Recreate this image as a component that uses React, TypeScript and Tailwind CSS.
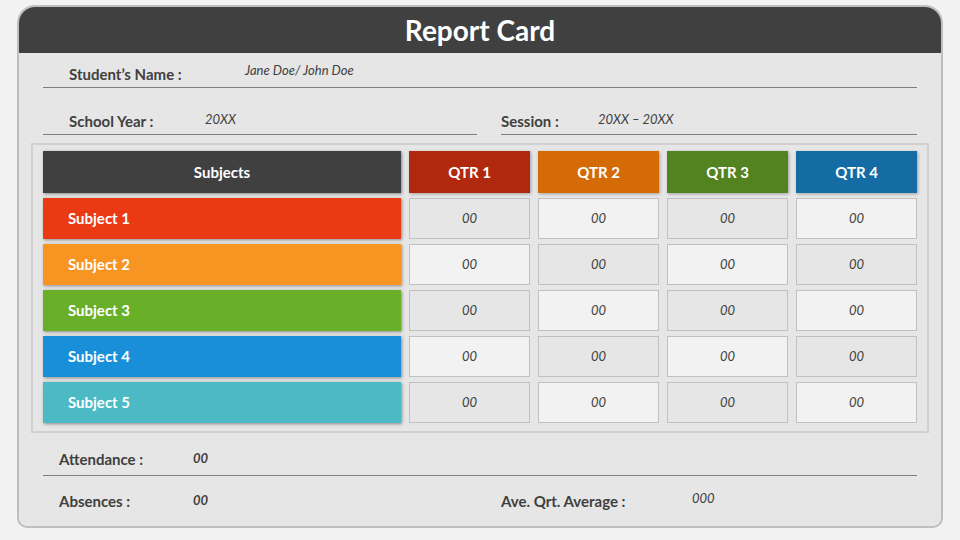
export default function App() {
  const q = [
    { t: "QTR 1", c: "bg-[#b0290f]" },
    { t: "QTR 2", c: "bg-[#d46b07]" },
    { t: "QTR 3", c: "bg-[#538320]" },
    { t: "QTR 4", c: "bg-[#156ba3]" },
  ];
  const subs = [
    { t: "Subject 1", c: "bg-[#ea3a14]" },
    { t: "Subject 2", c: "bg-[#f89522]" },
    { t: "Subject 3", c: "bg-[#6aaf28]" },
    { t: "Subject 4", c: "bg-[#1a8fd9]" },
    { t: "Subject 5", c: "bg-[#4bbac4]" },
  ];
  const gray = "bg-[#e6e6e6]";
  const white = "bg-[#f2f2f2]";
  return (
    <div className="w-[960px] h-[540px] bg-[#f2f2f2] pt-[5px] pl-[17px] text-[#404040]" style={{ fontFamily: "Lato, 'Open Sans', sans-serif" }}>
      <div className="w-[926px] h-[523px] bg-[#e6e6e6] border-2 border-[#bfbfbf] rounded-t-[18px] rounded-b-[10px] overflow-hidden flex flex-col">
        <div className="h-[46px] bg-[#404040] flex items-center justify-center text-white font-bold text-[28px]">Report Card</div>
        <div className="mx-[24px] mt-[8px] h-[28px] border-b border-[#7f7f7f] flex items-center">
          <span className="ml-[26px] w-[176px] font-bold text-[15px]">Student’s Name :</span>
          <span className="italic text-[13px] -mt-[6px]">Jane Doe/ John Doe</span>
        </div>
        <div className="mx-[24px] mt-[19px] h-[28px] flex">
          <div className="w-[434px] border-b border-[#7f7f7f] flex items-center">
            <span className="ml-[26px] w-[136px] font-bold text-[15px]">School Year :</span>
            <span className="italic text-[13px] -mt-[2px]">20XX</span>
          </div>
          <div className="ml-[24px] flex-1 border-b border-[#7f7f7f] flex items-center">
            <span className="w-[97px] font-bold text-[15px]">Session :</span>
            <span className="italic text-[13px] -mt-[2px]">20XX – 20XX</span>
          </div>
        </div>
        <div className="mx-[12px] mt-[8px] w-[898px] h-[292px] border-2 border-[#d0d0d0] bg-[#e6e6e6] px-[10px] pt-[6px] flex flex-col gap-[5px]">
          <div className="flex h-[42px] gap-[8px]">
            <div className="w-[358px] bg-[#404040] text-white font-bold text-[15px] flex items-center justify-center shadow-[1px_1px_3px_rgba(0,0,0,0.4)]">Subjects</div>
            {q.map((x) => (
              <div key={x.t} className={`w-[121px] ${x.c} text-white font-bold text-[15px] flex items-center justify-center shadow-[1px_1px_3px_rgba(0,0,0,0.3)]`}>{x.t}</div>
            ))}
          </div>
          {subs.map((s, i) => (
            <div key={s.t} className="flex h-[41px] gap-[8px]">
              <div className={`w-[358px] ${s.c} text-white font-bold text-[15px] flex items-center pl-[25px] shadow-[1px_1px_3px_rgba(0,0,0,0.4)]`}>{s.t}</div>
              {[0, 1, 2, 3].map((j) => {
                const g = i % 2 === 0 ? j % 2 === 0 : j % 2 === 1;
                return (
                  <div key={j} className={`w-[121px] ${g ? gray : white} border border-[#c0c0c0] italic text-[13px] flex items-center justify-center`}>00</div>
                );
              })}
            </div>
          ))}
        </div>
        <div className="mx-[24px] mt-[10px] h-[34px] border-b border-[#7f7f7f] flex items-center">
          <span className="ml-[16px] w-[134px] font-bold text-[15px]">Attendance :</span>
          <span className="italic font-bold text-[13px]">00</span>
        </div>
        <div className="mx-[24px] h-[50px] flex items-center">
          <span className="ml-[16px] w-[134px] font-bold text-[15px]">Absences :</span>
          <span className="italic font-bold text-[13px] w-[308px]">00</span>
          <span className="w-[191px] font-bold text-[15px]">Ave. Qrt. Average :</span>
          <span className="italic text-[13px] -mt-[4px]">000</span>
        </div>
      </div>
    </div>
  );
}
